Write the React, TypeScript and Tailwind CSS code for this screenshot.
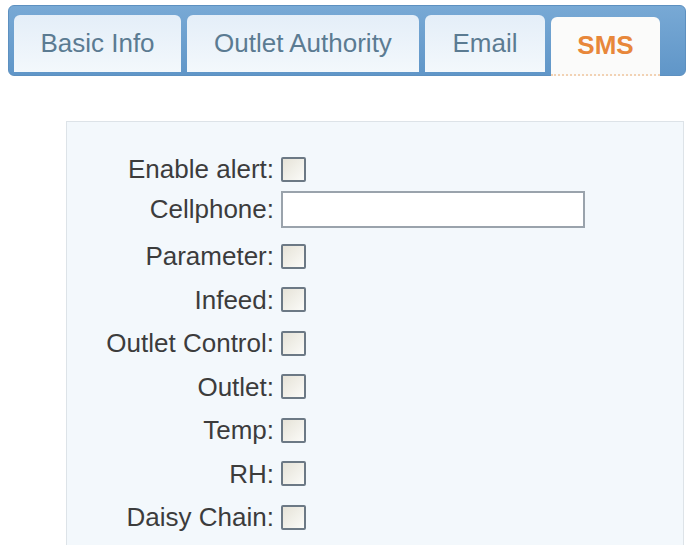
import React from 'react';

const tabs = [
  { label: 'Basic Info', width: 'w-[167px]' },
  { label: 'Outlet Authority', width: 'w-[232px]' },
  { label: 'Email', width: 'w-[120px]' },
  { label: 'SMS', width: 'w-[109px]', active: true },
];

const fields: { label: string; kind: 'check' | 'text'; row: string }[] = [
  { label: 'Enable alert:', kind: 'check', row: 'h-[42px]' },
  { label: 'Cellphone:', kind: 'text', row: 'h-[44.5px] pb-[6px]' },
  { label: 'Parameter:', kind: 'check', row: 'h-[43.5px]' },
  { label: 'Infeed:', kind: 'check', row: 'h-[43.5px]' },
  { label: 'Outlet Control:', kind: 'check', row: 'h-[43.5px]' },
  { label: 'Outlet:', kind: 'check', row: 'h-[43.5px]' },
  { label: 'Temp:', kind: 'check', row: 'h-[43.5px]' },
  { label: 'RH:', kind: 'check', row: 'h-[43.5px]' },
  { label: 'Daisy Chain:', kind: 'check', row: 'h-[43.5px]' },
];

const Checkbox: React.FC = () => (
  <span className="block w-[25px] h-[25px] border-2 border-[#6c7985] rounded-[2px] bg-gradient-to-br from-[#e6e3d8] to-[#fbfbf8]" />
);

const App: React.FC = () => {
  return (
    <div className="w-[687px] h-[545px] bg-white overflow-hidden font-['Liberation_Sans',Arial,sans-serif]">
      {/* tab strip */}
      <div className="ml-[8px] mt-[5px] w-[678px] h-[71px] rounded-[6px] border border-[#5d90c0] bg-gradient-to-b from-[#78a9d5] to-[#6096c8] flex items-end gap-[6px] pl-[5px]">
        {tabs.map((t) => (
          <div
            key={t.label}
            className={`${t.width} flex items-center justify-center rounded-t-[6px] text-[26px] ${
              t.active
                ? 'h-[59px] mb-[-1px] bg-[#fbfbfa] text-[#e8873a] font-bold border-b-2 border-dotted border-[#f2d2b4]'
                : 'h-[57px] mb-[3px] bg-gradient-to-b from-[#e4eef8] to-[#f3f8fc] text-[#5b7b92]'
            }`}
          >
            {t.label}
          </div>
        ))}
      </div>

      {/* sms settings panel */}
      <div className="ml-[66px] mt-[45px] w-[618px] h-[500px] border border-[#dde3e8] bg-[#f3f8fc] pt-[26px]">
        {fields.map((f) => (
          <div key={f.label} className={`${f.row} flex items-center`}>
            <div className="w-[207px] text-right text-[26px] text-[#3c3c3c] leading-none">{f.label}</div>
            <div className="ml-[7px]">
              {f.kind === 'check' ? (
                <Checkbox />
              ) : (
                <span className="block w-[304px] h-[37px] border-2 border-[#9aa3ac] bg-white" />
              )}
            </div>
          </div>
        ))}
      </div>
    </div>
  );
};

export default App;
